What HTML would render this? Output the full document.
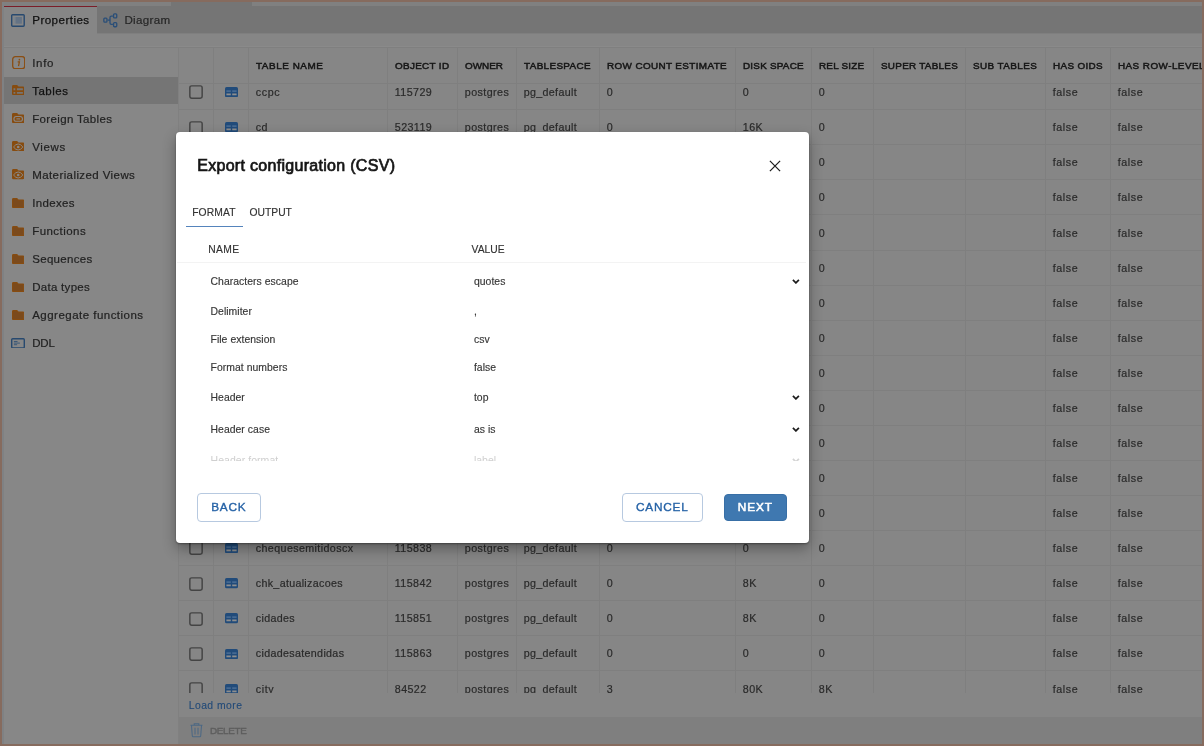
<!DOCTYPE html>
<html lang="en">
<head>
<meta charset="utf-8">
<title>Export configuration (CSV)</title>
<style>
*{box-sizing:border-box;margin:0;padding:0}
html,body{width:1204px;height:746px;overflow:hidden}
body{background:#868686;font-family:"Liberation Sans",sans-serif;color:#1c1c1c}
#app{will-change:transform;position:absolute;left:0;top:0;width:1204px;height:746px;background:#868686;overflow:hidden}
.abs{position:absolute}
.t{position:absolute;white-space:nowrap;line-height:1}
#frame{left:0;top:0;width:1204px;height:746px;box-shadow:inset 0 0 0 2px #866b5e}
#topstrip{left:2px;top:2px;width:1200px;height:4px;background:#808080}
#topstrip i{position:absolute;left:169px;top:0;width:81px;height:4px;background:#757575}
#leftstrip{left:2px;top:2px;width:2px;height:742px;background:#7f8183}
#tabbar{left:4px;top:6px;width:1198px;height:27px;background:#757575}
#tabbar2{left:96.500px;top:33px;width:1105.500px;height:1px;background:#7f7f7f}
#tab1{left:4px;top:6px;width:92.500px;height:27px;background:#868686}
#redline{left:4px;top:5.800px;width:92.500px;height:1.300px;background:#7b1d28}
.k1{color:#111;-webkit-text-stroke:.25px #111}.k2{color:#262626;-webkit-text-stroke:.2px #262626}
#hline0{left:4px;top:46px;width:1198px;height:1px;background:#8a8a8a}
#hline{left:4px;top:47px;width:1198px;height:1px;background:#7f7f7f}
#side{left:4px;top:48px;width:174px;height:696px;background:#878787}
#sel{left:4px;top:77px;width:174px;height:27.400px;background:#757575}
.sb{color:#222;-webkit-text-stroke:.2px #222}.sb.on{color:#111;-webkit-text-stroke:.25px #111}
#vline{left:178px;top:48px;width:1px;height:696px;background:#808080}
#grid{left:0;top:48px;width:1202px;height:645px;overflow:hidden}
#grid>*{margin-top:-48px}
#ghead{left:179px;top:48px;width:1023px;height:36px;background:#868686;border-bottom:1px solid #7f7f7f}
.rl{left:179px;width:1023px;height:1px;background:#7f7f7f}
.cl,.cl2{top:48px;width:1px;height:645px;background:#7f7f7f}
.cl2{height:36px}
.cb{position:absolute;left:189px;width:14px;height:14px;border:1.800px solid #3e3e3e;border-radius:2.500px}
.ce{color:#2a2a2a;-webkit-text-stroke:.2px #2a2a2a}
.gh{color:#161616;-webkit-text-stroke:.5px #161616}
.lm{color:#224a78;-webkit-text-stroke:.1px #224a78}
#foot{left:179px;top:717.400px;width:1023px;height:26.600px;background:#7f7f7f}
.del{color:#5e5e5e;-webkit-text-stroke:.4px #5e5e5e}
#dlg{left:176px;top:131.500px;width:632.800px;height:411px;background:#fff;border-radius:4px;box-shadow:0 1px 2px rgba(0,0,0,.35),0 6px 14px rgba(0,0,0,.32)}
.ttl{color:#161616;-webkit-text-stroke:.7px #161616}
.dt{color:#333;-webkit-text-stroke:.15px #333}
#ul{left:185.500px;top:225.500px;width:57px;height:1.400px;background:#5584bc}
#thl{left:177px;top:262px;width:629px;height:1px;background:#f3f3f3}
.pr{color:#363636;-webkit-text-stroke:.15px #363636}
#clip{left:176px;top:450px;width:632px;height:11.200px;overflow:hidden}
.fd{color:#cfcfcf;-webkit-text-stroke:0 #cfcfcf}
.btn{top:493.100px;height:28.500px;border:1px solid #b7c9e0;border-radius:4px;background:#fff}
.btn.nx{background:#3f78b0;border-color:#386fa6;top:493.600px;height:27.700px}
.bt{color:#2562a6;-webkit-text-stroke:.35px #2562a6}
.bt.bn{color:#fff;-webkit-text-stroke:.55px #fff}
</style>
</head>
<body>
<div id="app">
<div class="abs" id="topstrip"><i></i></div>
<div class="abs" id="tabbar"></div><div class="abs" id="tabbar2"></div>
<div class="abs" id="tab1"></div><div class="abs" id="redline"></div>
<svg class="abs" style="left:11.200px;top:14px" width="14" height="13" viewBox="0 0 14 13"><rect x=".7" y=".7" width="12.500" height="11.500" rx=".9" fill="none" stroke="#27496f" stroke-width="1.400"/><rect x="2.800" y="3" width="1.700" height="6.700" fill="#78838d"/><rect x="4.500" y="3" width="6.400" height="6.700" fill="#647385"/></svg>
<span class="t k1" style="left:32.2px;top:13.8px;font-size:11.6px;letter-spacing:0.455px;">Properties</span>
<svg class="abs" style="left:103px;top:13.200px" width="15" height="15" viewBox="0 0 15 15" fill="none" stroke="#294e78" stroke-width="1.300"><rect x=".85" y="5.150" width="3.100" height="3.900" rx=".9"/><rect x="10.550" y=".85" width="3.200" height="4" rx=".9"/><rect x="10.550" y="9.650" width="3.200" height="4.100" rx=".9"/><path d="M4.600 7.200h2.400M9.900 3.100H8.300Q7 3.100 7 4.400v5.700q0 1.300 1.300 1.300h1.600"/></svg>
<span class="t k2" style="left:124.4px;top:13.8px;font-size:11.6px;letter-spacing:0.312px;">Diagram</span>
<div class="abs" id="hline0"></div><div class="abs" id="hline"></div>
<div class="abs" id="side"></div><div class="abs" id="sel"></div>
<svg class="abs" style="left:11.7px;top:55.7px" width="13.4" height="13.4" viewBox="0 0 13.4 13.4"><rect x=".7" y=".7" width="12" height="12" rx="2.600" fill="none" stroke="#8a4e13" stroke-width="1.300"/><circle cx="7.400" cy="3.700" r=".85" fill="#8a4e13"/><path d="M5.700 5.900h1.700l-.9 4.300" fill="none" stroke="#8a4e13" stroke-width="1.250"/></svg>
<span class="t sb" style="left:32.2px;top:57.5px;font-size:11.5px;letter-spacing:0.697px;">Info</span>
<svg class="abs" style="left:11.9px;top:85.2px" width="12.4" height="10.2" viewBox="0 0 12.4 10.2"><path d="M1.500 .6h3.300l1.300 1.400h4.800q.9 0 .9 .9v5.800q0 .9-.9 .9H1.500q-.9 0-.9-.9V1.500q0-.9 .9-.9z" fill="#874c10" stroke="#874c10" stroke-width="1.200"/><path d="M1.500 3.300h1.800v1.900H1.500zM4.900 3.300h6v1.900h-6zM1.500 6.900h1.800v1.900H1.500zM4.900 6.900h6v1.900h-6z" fill="#757575"/></svg>
<span class="t sb on" style="left:32.2px;top:85.6px;font-size:11.5px;letter-spacing:0.505px;">Tables</span>
<svg class="abs" style="left:11.9px;top:113.3px" width="12.4" height="10.2" viewBox="0 0 12.4 10.2"><path d="M1.500 .6h3.300l1.300 1.400h4.800q.9 0 .9 .9v5.800q0 .9-.9 .9H1.500q-.9 0-.9-.9V1.500q0-.9 .9-.9z" fill="#874c10" stroke="#874c10" stroke-width="1.200"/><rect x="1.900" y="3.500" width="8.600" height="4.800" rx="2.400" fill="none" stroke="#888888" stroke-width="1.100"/><path d="M4.400 5.900h3.600" stroke="#888888" stroke-width="1.100"/></svg>
<span class="t sb" style="left:32.2px;top:113.6px;font-size:11.5px;letter-spacing:0.349px;">Foreign Tables</span>
<svg class="abs" style="left:11.9px;top:141.3px" width="12.4" height="10.2" viewBox="0 0 12.4 10.2"><path d="M1.500 .6h3.300l1.300 1.400h4.800q.9 0 .9 .9v5.800q0 .9-.9 .9H1.500q-.9 0-.9-.9V1.500q0-.9 .9-.9z" fill="#874c10" stroke="#874c10" stroke-width="1.200"/><path d="M1.500 6q2.200-3 4.700-3t4.700 3q-2.200 3-4.700 3T1.500 6z" fill="none" stroke="#888888" stroke-width="1"/><circle cx="6.200" cy="6" r="1.300" fill="#888888"/></svg>
<span class="t sb" style="left:32.2px;top:141.7px;font-size:11.5px;letter-spacing:0.627px;">Views</span>
<svg class="abs" style="left:11.9px;top:169.4px" width="12.4" height="10.2" viewBox="0 0 12.4 10.2"><path d="M1.500 .6h3.300l1.300 1.400h4.800q.9 0 .9 .9v5.800q0 .9-.9 .9H1.500q-.9 0-.9-.9V1.500q0-.9 .9-.9z" fill="#874c10" stroke="#874c10" stroke-width="1.200"/><path d="M1.500 6q2.200-3 4.700-3t4.700 3q-2.200 3-4.700 3T1.500 6z" fill="none" stroke="#888888" stroke-width="1"/><circle cx="6.200" cy="6" r="1.300" fill="#888888"/></svg>
<span class="t sb" style="left:32.2px;top:169.7px;font-size:11.5px;letter-spacing:0.412px;">Materialized Views</span>
<svg class="abs" style="left:11.9px;top:197.5px" width="12.4" height="10.2" viewBox="0 0 12.4 10.2"><path d="M1.500 .6h3.300l1.300 1.400h4.800q.9 0 .9 .9v5.800q0 .9-.9 .9H1.500q-.9 0-.9-.9V1.500q0-.9 .9-.9z" fill="#7b4a1c" stroke="#874c10" stroke-width="1.200"/></svg>
<span class="t sb" style="left:32.2px;top:197.8px;font-size:11.5px;letter-spacing:0.333px;">Indexes</span>
<svg class="abs" style="left:11.9px;top:225.6px" width="12.4" height="10.2" viewBox="0 0 12.4 10.2"><path d="M1.500 .6h3.300l1.300 1.400h4.800q.9 0 .9 .9v5.800q0 .9-.9 .9H1.500q-.9 0-.9-.9V1.500q0-.9 .9-.9z" fill="#7b4a1c" stroke="#874c10" stroke-width="1.200"/></svg>
<span class="t sb" style="left:32.2px;top:225.8px;font-size:11.5px;letter-spacing:0.452px;">Functions</span>
<svg class="abs" style="left:11.9px;top:253.7px" width="12.4" height="10.2" viewBox="0 0 12.4 10.2"><path d="M1.500 .6h3.300l1.300 1.400h4.800q.9 0 .9 .9v5.800q0 .9-.9 .9H1.500q-.9 0-.9-.9V1.500q0-.9 .9-.9z" fill="#7b4a1c" stroke="#874c10" stroke-width="1.200"/></svg>
<span class="t sb" style="left:32.2px;top:253.9px;font-size:11.5px;letter-spacing:0.316px;">Sequences</span>
<svg class="abs" style="left:11.9px;top:281.7px" width="12.4" height="10.2" viewBox="0 0 12.4 10.2"><path d="M1.500 .6h3.300l1.300 1.400h4.800q.9 0 .9 .9v5.800q0 .9-.9 .9H1.500q-.9 0-.9-.9V1.500q0-.9 .9-.9z" fill="#7b4a1c" stroke="#874c10" stroke-width="1.200"/></svg>
<span class="t sb" style="left:32.2px;top:281.9px;font-size:11.5px;letter-spacing:0.288px;">Data types</span>
<svg class="abs" style="left:11.9px;top:309.8px" width="12.4" height="10.2" viewBox="0 0 12.4 10.2"><path d="M1.500 .6h3.300l1.300 1.400h4.800q.9 0 .9 .9v5.800q0 .9-.9 .9H1.500q-.9 0-.9-.9V1.500q0-.9 .9-.9z" fill="#7b4a1c" stroke="#874c10" stroke-width="1.200"/></svg>
<span class="t sb" style="left:32.2px;top:310.0px;font-size:11.5px;letter-spacing:0.477px;">Aggregate functions</span>
<svg class="abs" style="left:11.1px;top:337.6px" width="14" height="10.7" viewBox="0 0 14 10.7"><rect x=".7" y=".7" width="12.600" height="9.300" rx="1" fill="none" stroke="#27496f" stroke-width="1.400"/><path d="M2.900 3.500h3.600M2.900 5.100h6M2.900 6.700h3.200" stroke="#3a5878" stroke-width="1"/></svg>
<span class="t sb" style="left:32.2px;top:338.0px;font-size:11.5px;letter-spacing:-0.169px;">DDL</span>
<div class="abs" id="vline"></div>
<div class="abs" id="grid">
<div class="abs rl" style="top:109.0px"></div>
<svg class="abs" style="left:189px;top:85.4px" width="14" height="14" viewBox="0 0 14 14"><rect x=".85" y=".85" width="12.300" height="12.300" rx="1.800" fill="none" stroke="#444" stroke-width="1.450"/></svg>
<svg class="abs" style="left:225px;top:87.2px" width="13" height="10.300" viewBox="0 0 13 10.300"><rect width="13" height="10.300" rx="1.600" fill="#214b7a"/><path d="M1.400 3.300h4.400v1.700H1.400zM7.200 3.300h4.400v1.700H7.200z" fill="#466a92"/><path d="M1.400 6.600h4.400v1.700H1.400zM7.200 6.600h4.400v1.700H7.200z" fill="#8e8e8e"/></svg>
<span class="t ce" style="left:255.8px;top:87.1px;font-size:10.7px;letter-spacing:0.642px;">ccpc</span>
<span class="t ce" style="left:394.8px;top:87.1px;font-size:10.7px;letter-spacing:0.427px;">115729</span>
<span class="t ce" style="left:464.8px;top:87.1px;font-size:10.7px;letter-spacing:0.43px;">postgres</span>
<span class="t ce" style="left:523.8px;top:87.1px;font-size:10.7px;letter-spacing:0.321px;">pg_default</span>
<span class="t ce" style="left:606.8px;top:87.1px;font-size:10.7px;letter-spacing:0.4px;">0</span>
<span class="t ce" style="left:742.8px;top:87.1px;font-size:10.7px;letter-spacing:0.4px;">0</span>
<span class="t ce" style="left:818.8px;top:87.1px;font-size:10.7px;letter-spacing:0.4px;">0</span>
<span class="t ce" style="left:1052.8px;top:87.1px;font-size:10.7px;letter-spacing:0.558px;">false</span>
<span class="t ce" style="left:1117.8px;top:87.1px;font-size:10.7px;letter-spacing:0.558px;">false</span>
<div class="abs rl" style="top:144.0px"></div>
<svg class="abs" style="left:189px;top:120.5px" width="14" height="14" viewBox="0 0 14 14"><rect x=".85" y=".85" width="12.300" height="12.300" rx="1.800" fill="none" stroke="#444" stroke-width="1.450"/></svg>
<svg class="abs" style="left:225px;top:122.3px" width="13" height="10.300" viewBox="0 0 13 10.300"><rect width="13" height="10.300" rx="1.600" fill="#214b7a"/><path d="M1.400 3.300h4.400v1.700H1.400zM7.200 3.300h4.400v1.700H7.200z" fill="#466a92"/><path d="M1.400 6.600h4.400v1.700H1.400zM7.200 6.600h4.400v1.700H7.200z" fill="#8e8e8e"/></svg>
<span class="t ce" style="left:255.8px;top:122.2px;font-size:10.7px;letter-spacing:0.4px;">cd</span>
<span class="t ce" style="left:394.8px;top:122.2px;font-size:10.7px;letter-spacing:0.4px;">523119</span>
<span class="t ce" style="left:464.8px;top:122.2px;font-size:10.7px;letter-spacing:0.43px;">postgres</span>
<span class="t ce" style="left:523.8px;top:122.2px;font-size:10.7px;letter-spacing:0.321px;">pg_default</span>
<span class="t ce" style="left:606.8px;top:122.2px;font-size:10.7px;letter-spacing:0.4px;">0</span>
<span class="t ce" style="left:742.8px;top:122.2px;font-size:10.7px;letter-spacing:0.4px;">16K</span>
<span class="t ce" style="left:818.8px;top:122.2px;font-size:10.7px;letter-spacing:0.4px;">0</span>
<span class="t ce" style="left:1052.8px;top:122.2px;font-size:10.7px;letter-spacing:0.558px;">false</span>
<span class="t ce" style="left:1117.8px;top:122.2px;font-size:10.7px;letter-spacing:0.558px;">false</span>
<div class="abs rl" style="top:179.0px"></div>
<svg class="abs" style="left:189px;top:155.6px" width="14" height="14" viewBox="0 0 14 14"><rect x=".85" y=".85" width="12.300" height="12.300" rx="1.800" fill="none" stroke="#444" stroke-width="1.450"/></svg>
<svg class="abs" style="left:225px;top:157.4px" width="13" height="10.300" viewBox="0 0 13 10.300"><rect width="13" height="10.300" rx="1.600" fill="#214b7a"/><path d="M1.400 3.300h4.400v1.700H1.400zM7.200 3.300h4.400v1.700H7.200z" fill="#466a92"/><path d="M1.400 6.600h4.400v1.700H1.400zM7.200 6.600h4.400v1.700H7.200z" fill="#8e8e8e"/></svg>
<span class="t ce" style="left:255.8px;top:157.3px;font-size:10.7px;letter-spacing:0.4px;">cda</span>
<span class="t ce" style="left:394.8px;top:157.3px;font-size:10.7px;letter-spacing:0.4px;">115735</span>
<span class="t ce" style="left:464.8px;top:157.3px;font-size:10.7px;letter-spacing:0.43px;">postgres</span>
<span class="t ce" style="left:523.8px;top:157.3px;font-size:10.7px;letter-spacing:0.321px;">pg_default</span>
<span class="t ce" style="left:606.8px;top:157.3px;font-size:10.7px;letter-spacing:0.4px;">0</span>
<span class="t ce" style="left:742.8px;top:157.3px;font-size:10.7px;letter-spacing:0.4px;">0</span>
<span class="t ce" style="left:818.8px;top:157.3px;font-size:10.7px;letter-spacing:0.4px;">0</span>
<span class="t ce" style="left:1052.8px;top:157.3px;font-size:10.7px;letter-spacing:0.558px;">false</span>
<span class="t ce" style="left:1117.8px;top:157.3px;font-size:10.7px;letter-spacing:0.558px;">false</span>
<div class="abs rl" style="top:214.0px"></div>
<svg class="abs" style="left:189px;top:190.6px" width="14" height="14" viewBox="0 0 14 14"><rect x=".85" y=".85" width="12.300" height="12.300" rx="1.800" fill="none" stroke="#444" stroke-width="1.450"/></svg>
<svg class="abs" style="left:225px;top:192.4px" width="13" height="10.300" viewBox="0 0 13 10.300"><rect width="13" height="10.300" rx="1.600" fill="#214b7a"/><path d="M1.400 3.300h4.400v1.700H1.400zM7.200 3.300h4.400v1.700H7.200z" fill="#466a92"/><path d="M1.400 6.600h4.400v1.700H1.400zM7.200 6.600h4.400v1.700H7.200z" fill="#8e8e8e"/></svg>
<span class="t ce" style="left:255.8px;top:192.4px;font-size:10.7px;letter-spacing:0.4px;">cdb</span>
<span class="t ce" style="left:394.8px;top:192.4px;font-size:10.7px;letter-spacing:0.4px;">115741</span>
<span class="t ce" style="left:464.8px;top:192.4px;font-size:10.7px;letter-spacing:0.43px;">postgres</span>
<span class="t ce" style="left:523.8px;top:192.4px;font-size:10.7px;letter-spacing:0.321px;">pg_default</span>
<span class="t ce" style="left:606.8px;top:192.4px;font-size:10.7px;letter-spacing:0.4px;">0</span>
<span class="t ce" style="left:742.8px;top:192.4px;font-size:10.7px;letter-spacing:0.4px;">0</span>
<span class="t ce" style="left:818.8px;top:192.4px;font-size:10.7px;letter-spacing:0.4px;">0</span>
<span class="t ce" style="left:1052.8px;top:192.4px;font-size:10.7px;letter-spacing:0.558px;">false</span>
<span class="t ce" style="left:1117.8px;top:192.4px;font-size:10.7px;letter-spacing:0.558px;">false</span>
<div class="abs rl" style="top:250.0px"></div>
<svg class="abs" style="left:189px;top:225.7px" width="14" height="14" viewBox="0 0 14 14"><rect x=".85" y=".85" width="12.300" height="12.300" rx="1.800" fill="none" stroke="#444" stroke-width="1.450"/></svg>
<svg class="abs" style="left:225px;top:227.5px" width="13" height="10.300" viewBox="0 0 13 10.300"><rect width="13" height="10.300" rx="1.600" fill="#214b7a"/><path d="M1.400 3.300h4.400v1.700H1.400zM7.200 3.300h4.400v1.700H7.200z" fill="#466a92"/><path d="M1.400 6.600h4.400v1.700H1.400zM7.200 6.600h4.400v1.700H7.200z" fill="#8e8e8e"/></svg>
<span class="t ce" style="left:255.8px;top:227.5px;font-size:10.7px;letter-spacing:0.4px;">cdc</span>
<span class="t ce" style="left:394.8px;top:227.5px;font-size:10.7px;letter-spacing:0.4px;">115750</span>
<span class="t ce" style="left:464.8px;top:227.5px;font-size:10.7px;letter-spacing:0.43px;">postgres</span>
<span class="t ce" style="left:523.8px;top:227.5px;font-size:10.7px;letter-spacing:0.321px;">pg_default</span>
<span class="t ce" style="left:606.8px;top:227.5px;font-size:10.7px;letter-spacing:0.4px;">0</span>
<span class="t ce" style="left:742.8px;top:227.5px;font-size:10.7px;letter-spacing:0.4px;">0</span>
<span class="t ce" style="left:818.8px;top:227.5px;font-size:10.7px;letter-spacing:0.4px;">0</span>
<span class="t ce" style="left:1052.8px;top:227.5px;font-size:10.7px;letter-spacing:0.558px;">false</span>
<span class="t ce" style="left:1117.8px;top:227.5px;font-size:10.7px;letter-spacing:0.558px;">false</span>
<div class="abs rl" style="top:285.0px"></div>
<svg class="abs" style="left:189px;top:260.8px" width="14" height="14" viewBox="0 0 14 14"><rect x=".85" y=".85" width="12.300" height="12.300" rx="1.800" fill="none" stroke="#444" stroke-width="1.450"/></svg>
<svg class="abs" style="left:225px;top:262.6px" width="13" height="10.300" viewBox="0 0 13 10.300"><rect width="13" height="10.300" rx="1.600" fill="#214b7a"/><path d="M1.400 3.300h4.400v1.700H1.400zM7.200 3.300h4.400v1.700H7.200z" fill="#466a92"/><path d="M1.400 6.600h4.400v1.700H1.400zM7.200 6.600h4.400v1.700H7.200z" fill="#8e8e8e"/></svg>
<span class="t ce" style="left:255.8px;top:262.5px;font-size:10.7px;letter-spacing:0.4px;">cdd</span>
<span class="t ce" style="left:394.8px;top:262.5px;font-size:10.7px;letter-spacing:0.4px;">115759</span>
<span class="t ce" style="left:464.8px;top:262.5px;font-size:10.7px;letter-spacing:0.43px;">postgres</span>
<span class="t ce" style="left:523.8px;top:262.5px;font-size:10.7px;letter-spacing:0.321px;">pg_default</span>
<span class="t ce" style="left:606.8px;top:262.5px;font-size:10.7px;letter-spacing:0.4px;">0</span>
<span class="t ce" style="left:742.8px;top:262.5px;font-size:10.7px;letter-spacing:0.4px;">0</span>
<span class="t ce" style="left:818.8px;top:262.5px;font-size:10.7px;letter-spacing:0.4px;">0</span>
<span class="t ce" style="left:1052.8px;top:262.5px;font-size:10.7px;letter-spacing:0.558px;">false</span>
<span class="t ce" style="left:1117.8px;top:262.5px;font-size:10.7px;letter-spacing:0.558px;">false</span>
<div class="abs rl" style="top:320.0px"></div>
<svg class="abs" style="left:189px;top:295.9px" width="14" height="14" viewBox="0 0 14 14"><rect x=".85" y=".85" width="12.300" height="12.300" rx="1.800" fill="none" stroke="#444" stroke-width="1.450"/></svg>
<svg class="abs" style="left:225px;top:297.7px" width="13" height="10.300" viewBox="0 0 13 10.300"><rect width="13" height="10.300" rx="1.600" fill="#214b7a"/><path d="M1.400 3.300h4.400v1.700H1.400zM7.200 3.300h4.400v1.700H7.200z" fill="#466a92"/><path d="M1.400 6.600h4.400v1.700H1.400zM7.200 6.600h4.400v1.700H7.200z" fill="#8e8e8e"/></svg>
<span class="t ce" style="left:255.8px;top:297.6px;font-size:10.7px;letter-spacing:0.4px;">cde</span>
<span class="t ce" style="left:394.8px;top:297.6px;font-size:10.7px;letter-spacing:0.4px;">115765</span>
<span class="t ce" style="left:464.8px;top:297.6px;font-size:10.7px;letter-spacing:0.43px;">postgres</span>
<span class="t ce" style="left:523.8px;top:297.6px;font-size:10.7px;letter-spacing:0.321px;">pg_default</span>
<span class="t ce" style="left:606.8px;top:297.6px;font-size:10.7px;letter-spacing:0.4px;">0</span>
<span class="t ce" style="left:742.8px;top:297.6px;font-size:10.7px;letter-spacing:0.4px;">0</span>
<span class="t ce" style="left:818.8px;top:297.6px;font-size:10.7px;letter-spacing:0.4px;">0</span>
<span class="t ce" style="left:1052.8px;top:297.6px;font-size:10.7px;letter-spacing:0.558px;">false</span>
<span class="t ce" style="left:1117.8px;top:297.6px;font-size:10.7px;letter-spacing:0.558px;">false</span>
<div class="abs rl" style="top:355.0px"></div>
<svg class="abs" style="left:189px;top:331.0px" width="14" height="14" viewBox="0 0 14 14"><rect x=".85" y=".85" width="12.300" height="12.300" rx="1.800" fill="none" stroke="#444" stroke-width="1.450"/></svg>
<svg class="abs" style="left:225px;top:332.8px" width="13" height="10.300" viewBox="0 0 13 10.300"><rect width="13" height="10.300" rx="1.600" fill="#214b7a"/><path d="M1.400 3.300h4.400v1.700H1.400zM7.200 3.300h4.400v1.700H7.200z" fill="#466a92"/><path d="M1.400 6.600h4.400v1.700H1.400zM7.200 6.600h4.400v1.700H7.200z" fill="#8e8e8e"/></svg>
<span class="t ce" style="left:255.8px;top:332.7px;font-size:10.7px;letter-spacing:0.4px;">cdf</span>
<span class="t ce" style="left:394.8px;top:332.7px;font-size:10.7px;letter-spacing:0.4px;">115771</span>
<span class="t ce" style="left:464.8px;top:332.7px;font-size:10.7px;letter-spacing:0.43px;">postgres</span>
<span class="t ce" style="left:523.8px;top:332.7px;font-size:10.7px;letter-spacing:0.321px;">pg_default</span>
<span class="t ce" style="left:606.8px;top:332.7px;font-size:10.7px;letter-spacing:0.4px;">0</span>
<span class="t ce" style="left:742.8px;top:332.7px;font-size:10.7px;letter-spacing:0.4px;">0</span>
<span class="t ce" style="left:818.8px;top:332.7px;font-size:10.7px;letter-spacing:0.4px;">0</span>
<span class="t ce" style="left:1052.8px;top:332.7px;font-size:10.7px;letter-spacing:0.558px;">false</span>
<span class="t ce" style="left:1117.8px;top:332.7px;font-size:10.7px;letter-spacing:0.558px;">false</span>
<div class="abs rl" style="top:390.0px"></div>
<svg class="abs" style="left:189px;top:366.0px" width="14" height="14" viewBox="0 0 14 14"><rect x=".85" y=".85" width="12.300" height="12.300" rx="1.800" fill="none" stroke="#444" stroke-width="1.450"/></svg>
<svg class="abs" style="left:225px;top:367.8px" width="13" height="10.300" viewBox="0 0 13 10.300"><rect width="13" height="10.300" rx="1.600" fill="#214b7a"/><path d="M1.400 3.300h4.400v1.700H1.400zM7.200 3.300h4.400v1.700H7.200z" fill="#466a92"/><path d="M1.400 6.600h4.400v1.700H1.400zM7.200 6.600h4.400v1.700H7.200z" fill="#8e8e8e"/></svg>
<span class="t ce" style="left:255.8px;top:367.8px;font-size:10.7px;letter-spacing:0.4px;">cdg</span>
<span class="t ce" style="left:394.8px;top:367.8px;font-size:10.7px;letter-spacing:0.4px;">115780</span>
<span class="t ce" style="left:464.8px;top:367.8px;font-size:10.7px;letter-spacing:0.43px;">postgres</span>
<span class="t ce" style="left:523.8px;top:367.8px;font-size:10.7px;letter-spacing:0.321px;">pg_default</span>
<span class="t ce" style="left:606.8px;top:367.8px;font-size:10.7px;letter-spacing:0.4px;">0</span>
<span class="t ce" style="left:742.8px;top:367.8px;font-size:10.7px;letter-spacing:0.4px;">0</span>
<span class="t ce" style="left:818.8px;top:367.8px;font-size:10.7px;letter-spacing:0.4px;">0</span>
<span class="t ce" style="left:1052.8px;top:367.8px;font-size:10.7px;letter-spacing:0.558px;">false</span>
<span class="t ce" style="left:1117.8px;top:367.8px;font-size:10.7px;letter-spacing:0.558px;">false</span>
<div class="abs rl" style="top:425.0px"></div>
<svg class="abs" style="left:189px;top:401.1px" width="14" height="14" viewBox="0 0 14 14"><rect x=".85" y=".85" width="12.300" height="12.300" rx="1.800" fill="none" stroke="#444" stroke-width="1.450"/></svg>
<svg class="abs" style="left:225px;top:402.9px" width="13" height="10.300" viewBox="0 0 13 10.300"><rect width="13" height="10.300" rx="1.600" fill="#214b7a"/><path d="M1.400 3.300h4.400v1.700H1.400zM7.200 3.300h4.400v1.700H7.200z" fill="#466a92"/><path d="M1.400 6.600h4.400v1.700H1.400zM7.200 6.600h4.400v1.700H7.200z" fill="#8e8e8e"/></svg>
<span class="t ce" style="left:255.8px;top:402.9px;font-size:10.7px;letter-spacing:0.4px;">cdh</span>
<span class="t ce" style="left:394.8px;top:402.9px;font-size:10.7px;letter-spacing:0.4px;">115789</span>
<span class="t ce" style="left:464.8px;top:402.9px;font-size:10.7px;letter-spacing:0.43px;">postgres</span>
<span class="t ce" style="left:523.8px;top:402.9px;font-size:10.7px;letter-spacing:0.321px;">pg_default</span>
<span class="t ce" style="left:606.8px;top:402.9px;font-size:10.7px;letter-spacing:0.4px;">0</span>
<span class="t ce" style="left:742.8px;top:402.9px;font-size:10.7px;letter-spacing:0.4px;">0</span>
<span class="t ce" style="left:818.8px;top:402.9px;font-size:10.7px;letter-spacing:0.4px;">0</span>
<span class="t ce" style="left:1052.8px;top:402.9px;font-size:10.7px;letter-spacing:0.558px;">false</span>
<span class="t ce" style="left:1117.8px;top:402.9px;font-size:10.7px;letter-spacing:0.558px;">false</span>
<div class="abs rl" style="top:460.0px"></div>
<svg class="abs" style="left:189px;top:436.2px" width="14" height="14" viewBox="0 0 14 14"><rect x=".85" y=".85" width="12.300" height="12.300" rx="1.800" fill="none" stroke="#444" stroke-width="1.450"/></svg>
<svg class="abs" style="left:225px;top:438.0px" width="13" height="10.300" viewBox="0 0 13 10.300"><rect width="13" height="10.300" rx="1.600" fill="#214b7a"/><path d="M1.400 3.300h4.400v1.700H1.400zM7.200 3.300h4.400v1.700H7.200z" fill="#466a92"/><path d="M1.400 6.600h4.400v1.700H1.400zM7.200 6.600h4.400v1.700H7.200z" fill="#8e8e8e"/></svg>
<span class="t ce" style="left:255.8px;top:437.9px;font-size:10.7px;letter-spacing:0.4px;">cdi</span>
<span class="t ce" style="left:394.8px;top:437.9px;font-size:10.7px;letter-spacing:0.4px;">115800</span>
<span class="t ce" style="left:464.8px;top:437.9px;font-size:10.7px;letter-spacing:0.43px;">postgres</span>
<span class="t ce" style="left:523.8px;top:437.9px;font-size:10.7px;letter-spacing:0.321px;">pg_default</span>
<span class="t ce" style="left:606.8px;top:437.9px;font-size:10.7px;letter-spacing:0.4px;">0</span>
<span class="t ce" style="left:742.8px;top:437.9px;font-size:10.7px;letter-spacing:0.4px;">0</span>
<span class="t ce" style="left:818.8px;top:437.9px;font-size:10.7px;letter-spacing:0.4px;">0</span>
<span class="t ce" style="left:1052.8px;top:437.9px;font-size:10.7px;letter-spacing:0.558px;">false</span>
<span class="t ce" style="left:1117.8px;top:437.9px;font-size:10.7px;letter-spacing:0.558px;">false</span>
<div class="abs rl" style="top:495.0px"></div>
<svg class="abs" style="left:189px;top:471.3px" width="14" height="14" viewBox="0 0 14 14"><rect x=".85" y=".85" width="12.300" height="12.300" rx="1.800" fill="none" stroke="#444" stroke-width="1.450"/></svg>
<svg class="abs" style="left:225px;top:473.1px" width="13" height="10.300" viewBox="0 0 13 10.300"><rect width="13" height="10.300" rx="1.600" fill="#214b7a"/><path d="M1.400 3.300h4.400v1.700H1.400zM7.200 3.300h4.400v1.700H7.200z" fill="#466a92"/><path d="M1.400 6.600h4.400v1.700H1.400zM7.200 6.600h4.400v1.700H7.200z" fill="#8e8e8e"/></svg>
<span class="t ce" style="left:255.8px;top:473.0px;font-size:10.7px;letter-spacing:0.4px;">cdj</span>
<span class="t ce" style="left:394.8px;top:473.0px;font-size:10.7px;letter-spacing:0.4px;">115811</span>
<span class="t ce" style="left:464.8px;top:473.0px;font-size:10.7px;letter-spacing:0.43px;">postgres</span>
<span class="t ce" style="left:523.8px;top:473.0px;font-size:10.7px;letter-spacing:0.321px;">pg_default</span>
<span class="t ce" style="left:606.8px;top:473.0px;font-size:10.7px;letter-spacing:0.4px;">0</span>
<span class="t ce" style="left:742.8px;top:473.0px;font-size:10.7px;letter-spacing:0.4px;">0</span>
<span class="t ce" style="left:818.8px;top:473.0px;font-size:10.7px;letter-spacing:0.4px;">0</span>
<span class="t ce" style="left:1052.8px;top:473.0px;font-size:10.7px;letter-spacing:0.558px;">false</span>
<span class="t ce" style="left:1117.8px;top:473.0px;font-size:10.7px;letter-spacing:0.558px;">false</span>
<div class="abs rl" style="top:530.0px"></div>
<svg class="abs" style="left:189px;top:506.4px" width="14" height="14" viewBox="0 0 14 14"><rect x=".85" y=".85" width="12.300" height="12.300" rx="1.800" fill="none" stroke="#444" stroke-width="1.450"/></svg>
<svg class="abs" style="left:225px;top:508.2px" width="13" height="10.300" viewBox="0 0 13 10.300"><rect width="13" height="10.300" rx="1.600" fill="#214b7a"/><path d="M1.400 3.300h4.400v1.700H1.400zM7.200 3.300h4.400v1.700H7.200z" fill="#466a92"/><path d="M1.400 6.600h4.400v1.700H1.400zM7.200 6.600h4.400v1.700H7.200z" fill="#8e8e8e"/></svg>
<span class="t ce" style="left:255.8px;top:508.1px;font-size:10.7px;letter-spacing:0.4px;">cdk</span>
<span class="t ce" style="left:394.8px;top:508.1px;font-size:10.7px;letter-spacing:0.4px;">115820</span>
<span class="t ce" style="left:464.8px;top:508.1px;font-size:10.7px;letter-spacing:0.43px;">postgres</span>
<span class="t ce" style="left:523.8px;top:508.1px;font-size:10.7px;letter-spacing:0.321px;">pg_default</span>
<span class="t ce" style="left:606.8px;top:508.1px;font-size:10.7px;letter-spacing:0.4px;">0</span>
<span class="t ce" style="left:742.8px;top:508.1px;font-size:10.7px;letter-spacing:0.4px;">0</span>
<span class="t ce" style="left:818.8px;top:508.1px;font-size:10.7px;letter-spacing:0.4px;">0</span>
<span class="t ce" style="left:1052.8px;top:508.1px;font-size:10.7px;letter-spacing:0.558px;">false</span>
<span class="t ce" style="left:1117.8px;top:508.1px;font-size:10.7px;letter-spacing:0.558px;">false</span>
<div class="abs rl" style="top:565.0px"></div>
<svg class="abs" style="left:189px;top:541.4px" width="14" height="14" viewBox="0 0 14 14"><rect x=".85" y=".85" width="12.300" height="12.300" rx="1.800" fill="none" stroke="#444" stroke-width="1.450"/></svg>
<svg class="abs" style="left:225px;top:543.2px" width="13" height="10.300" viewBox="0 0 13 10.300"><rect width="13" height="10.300" rx="1.600" fill="#214b7a"/><path d="M1.400 3.300h4.400v1.700H1.400zM7.200 3.300h4.400v1.700H7.200z" fill="#466a92"/><path d="M1.400 6.600h4.400v1.700H1.400zM7.200 6.600h4.400v1.700H7.200z" fill="#8e8e8e"/></svg>
<span class="t ce" style="left:255.8px;top:543.2px;font-size:10.7px;letter-spacing:0.394px;">chequesemitidoscx</span>
<span class="t ce" style="left:394.8px;top:543.2px;font-size:10.7px;letter-spacing:0.4px;">115838</span>
<span class="t ce" style="left:464.8px;top:543.2px;font-size:10.7px;letter-spacing:0.43px;">postgres</span>
<span class="t ce" style="left:523.8px;top:543.2px;font-size:10.7px;letter-spacing:0.321px;">pg_default</span>
<span class="t ce" style="left:606.8px;top:543.2px;font-size:10.7px;letter-spacing:0.4px;">0</span>
<span class="t ce" style="left:742.8px;top:543.2px;font-size:10.7px;letter-spacing:0.4px;">0</span>
<span class="t ce" style="left:818.8px;top:543.2px;font-size:10.7px;letter-spacing:0.4px;">0</span>
<span class="t ce" style="left:1052.8px;top:543.2px;font-size:10.7px;letter-spacing:0.558px;">false</span>
<span class="t ce" style="left:1117.8px;top:543.2px;font-size:10.7px;letter-spacing:0.558px;">false</span>
<div class="abs rl" style="top:600.0px"></div>
<svg class="abs" style="left:189px;top:576.5px" width="14" height="14" viewBox="0 0 14 14"><rect x=".85" y=".85" width="12.300" height="12.300" rx="1.800" fill="none" stroke="#444" stroke-width="1.450"/></svg>
<svg class="abs" style="left:225px;top:578.3px" width="13" height="10.300" viewBox="0 0 13 10.300"><rect width="13" height="10.300" rx="1.600" fill="#214b7a"/><path d="M1.400 3.300h4.400v1.700H1.400zM7.200 3.300h4.400v1.700H7.200z" fill="#466a92"/><path d="M1.400 6.600h4.400v1.700H1.400zM7.200 6.600h4.400v1.700H7.200z" fill="#8e8e8e"/></svg>
<span class="t ce" style="left:255.8px;top:578.3px;font-size:10.7px;letter-spacing:0.314px;">chk_atualizacoes</span>
<span class="t ce" style="left:394.8px;top:578.3px;font-size:10.7px;letter-spacing:0.4px;">115842</span>
<span class="t ce" style="left:464.8px;top:578.3px;font-size:10.7px;letter-spacing:0.43px;">postgres</span>
<span class="t ce" style="left:523.8px;top:578.3px;font-size:10.7px;letter-spacing:0.321px;">pg_default</span>
<span class="t ce" style="left:606.8px;top:578.3px;font-size:10.7px;letter-spacing:0.4px;">0</span>
<span class="t ce" style="left:742.8px;top:578.3px;font-size:10.7px;letter-spacing:0.4px;">8K</span>
<span class="t ce" style="left:818.8px;top:578.3px;font-size:10.7px;letter-spacing:0.4px;">0</span>
<span class="t ce" style="left:1052.8px;top:578.3px;font-size:10.7px;letter-spacing:0.558px;">false</span>
<span class="t ce" style="left:1117.8px;top:578.3px;font-size:10.7px;letter-spacing:0.558px;">false</span>
<div class="abs rl" style="top:635.0px"></div>
<svg class="abs" style="left:189px;top:611.6px" width="14" height="14" viewBox="0 0 14 14"><rect x=".85" y=".85" width="12.300" height="12.300" rx="1.800" fill="none" stroke="#444" stroke-width="1.450"/></svg>
<svg class="abs" style="left:225px;top:613.4px" width="13" height="10.300" viewBox="0 0 13 10.300"><rect width="13" height="10.300" rx="1.600" fill="#214b7a"/><path d="M1.400 3.300h4.400v1.700H1.400zM7.200 3.300h4.400v1.700H7.200z" fill="#466a92"/><path d="M1.400 6.600h4.400v1.700H1.400zM7.200 6.600h4.400v1.700H7.200z" fill="#8e8e8e"/></svg>
<span class="t ce" style="left:255.8px;top:613.3px;font-size:10.7px;letter-spacing:0.311px;">cidades</span>
<span class="t ce" style="left:394.8px;top:613.3px;font-size:10.7px;letter-spacing:0.4px;">115851</span>
<span class="t ce" style="left:464.8px;top:613.3px;font-size:10.7px;letter-spacing:0.43px;">postgres</span>
<span class="t ce" style="left:523.8px;top:613.3px;font-size:10.7px;letter-spacing:0.321px;">pg_default</span>
<span class="t ce" style="left:606.8px;top:613.3px;font-size:10.7px;letter-spacing:0.4px;">0</span>
<span class="t ce" style="left:742.8px;top:613.3px;font-size:10.7px;letter-spacing:0.4px;">8K</span>
<span class="t ce" style="left:818.8px;top:613.3px;font-size:10.7px;letter-spacing:0.4px;">0</span>
<span class="t ce" style="left:1052.8px;top:613.3px;font-size:10.7px;letter-spacing:0.558px;">false</span>
<span class="t ce" style="left:1117.8px;top:613.3px;font-size:10.7px;letter-spacing:0.558px;">false</span>
<div class="abs rl" style="top:670.0px"></div>
<svg class="abs" style="left:189px;top:646.7px" width="14" height="14" viewBox="0 0 14 14"><rect x=".85" y=".85" width="12.300" height="12.300" rx="1.800" fill="none" stroke="#444" stroke-width="1.450"/></svg>
<svg class="abs" style="left:225px;top:648.5px" width="13" height="10.300" viewBox="0 0 13 10.300"><rect width="13" height="10.300" rx="1.600" fill="#214b7a"/><path d="M1.400 3.300h4.400v1.700H1.400zM7.200 3.300h4.400v1.700H7.200z" fill="#466a92"/><path d="M1.400 6.600h4.400v1.700H1.400zM7.200 6.600h4.400v1.700H7.200z" fill="#8e8e8e"/></svg>
<span class="t ce" style="left:255.8px;top:648.4px;font-size:10.7px;letter-spacing:0.334px;">cidadesatendidas</span>
<span class="t ce" style="left:394.8px;top:648.4px;font-size:10.7px;letter-spacing:0.4px;">115863</span>
<span class="t ce" style="left:464.8px;top:648.4px;font-size:10.7px;letter-spacing:0.43px;">postgres</span>
<span class="t ce" style="left:523.8px;top:648.4px;font-size:10.7px;letter-spacing:0.321px;">pg_default</span>
<span class="t ce" style="left:606.8px;top:648.4px;font-size:10.7px;letter-spacing:0.4px;">0</span>
<span class="t ce" style="left:742.8px;top:648.4px;font-size:10.7px;letter-spacing:0.4px;">0</span>
<span class="t ce" style="left:818.8px;top:648.4px;font-size:10.7px;letter-spacing:0.4px;">0</span>
<span class="t ce" style="left:1052.8px;top:648.4px;font-size:10.7px;letter-spacing:0.558px;">false</span>
<span class="t ce" style="left:1117.8px;top:648.4px;font-size:10.7px;letter-spacing:0.558px;">false</span>
<div class="abs rl" style="top:706.0px"></div>
<svg class="abs" style="left:189px;top:681.8px" width="14" height="14" viewBox="0 0 14 14"><rect x=".85" y=".85" width="12.300" height="12.300" rx="1.800" fill="none" stroke="#444" stroke-width="1.450"/></svg>
<svg class="abs" style="left:225px;top:683.6px" width="13" height="10.300" viewBox="0 0 13 10.300"><rect width="13" height="10.300" rx="1.600" fill="#214b7a"/><path d="M1.400 3.300h4.400v1.700H1.400zM7.200 3.300h4.400v1.700H7.200z" fill="#466a92"/><path d="M1.400 6.600h4.400v1.700H1.400zM7.200 6.600h4.400v1.700H7.200z" fill="#8e8e8e"/></svg>
<span class="t ce" style="left:255.8px;top:683.5px;font-size:10.7px;letter-spacing:0.559px;">city</span>
<span class="t ce" style="left:394.8px;top:683.5px;font-size:10.7px;letter-spacing:0.4px;">84522</span>
<span class="t ce" style="left:464.8px;top:683.5px;font-size:10.7px;letter-spacing:0.43px;">postgres</span>
<span class="t ce" style="left:523.8px;top:683.5px;font-size:10.7px;letter-spacing:0.321px;">pg_default</span>
<span class="t ce" style="left:606.8px;top:683.5px;font-size:10.7px;letter-spacing:0.4px;">3</span>
<span class="t ce" style="left:742.8px;top:683.5px;font-size:10.7px;letter-spacing:0.4px;">80K</span>
<span class="t ce" style="left:818.8px;top:683.5px;font-size:10.7px;letter-spacing:0.4px;">8K</span>
<span class="t ce" style="left:1052.8px;top:683.5px;font-size:10.7px;letter-spacing:0.558px;">false</span>
<span class="t ce" style="left:1117.8px;top:683.5px;font-size:10.7px;letter-spacing:0.558px;">false</span>
<div class="abs cl" style="left:213px"></div>
<div class="abs cl" style="left:248px"></div>
<div class="abs cl" style="left:387px"></div>
<div class="abs cl" style="left:457px"></div>
<div class="abs cl" style="left:516px"></div>
<div class="abs cl" style="left:599px"></div>
<div class="abs cl" style="left:735px"></div>
<div class="abs cl" style="left:811px"></div>
<div class="abs cl" style="left:873px"></div>
<div class="abs cl" style="left:965px"></div>
<div class="abs cl" style="left:1045px"></div>
<div class="abs cl" style="left:1110px"></div>
<div class="abs" id="ghead"></div>
<span class="t gh" style="left:256.0px;top:60.6px;font-size:9.9px;letter-spacing:0.557px;">TABLE NAME</span>
<span class="t gh" style="left:395.0px;top:60.6px;font-size:9.9px;letter-spacing:0.329px;">OBJECT ID</span>
<span class="t gh" style="left:465.0px;top:60.6px;font-size:9.9px;letter-spacing:0.021px;">OWNER</span>
<span class="t gh" style="left:524.0px;top:60.6px;font-size:9.9px;letter-spacing:0.372px;">TABLESPACE</span>
<span class="t gh" style="left:607.0px;top:60.6px;font-size:9.9px;letter-spacing:0.379px;">ROW COUNT ESTIMATE</span>
<span class="t gh" style="left:743.0px;top:60.6px;font-size:9.9px;letter-spacing:0.233px;">DISK SPACE</span>
<span class="t gh" style="left:819.0px;top:60.6px;font-size:9.9px;letter-spacing:0.214px;">REL SIZE</span>
<span class="t gh" style="left:881.0px;top:60.6px;font-size:9.9px;letter-spacing:0.282px;">SUPER TABLES</span>
<span class="t gh" style="left:973.0px;top:60.6px;font-size:9.9px;letter-spacing:0.414px;">SUB TABLES</span>
<span class="t gh" style="left:1053.0px;top:60.6px;font-size:9.9px;letter-spacing:0.348px;">HAS OIDS</span>
<span class="t gh" style="left:1118.0px;top:60.6px;font-size:9.9px;letter-spacing:0.452px;">HAS ROW-LEVEL SECURITY</span>
<div class="abs cl2" style="left:213px"></div>
<div class="abs cl2" style="left:248px"></div>
<div class="abs cl2" style="left:387px"></div>
<div class="abs cl2" style="left:457px"></div>
<div class="abs cl2" style="left:516px"></div>
<div class="abs cl2" style="left:599px"></div>
<div class="abs cl2" style="left:735px"></div>
<div class="abs cl2" style="left:811px"></div>
<div class="abs cl2" style="left:873px"></div>
<div class="abs cl2" style="left:965px"></div>
<div class="abs cl2" style="left:1045px"></div>
<div class="abs cl2" style="left:1110px"></div>
</div>
<span class="t lm" style="left:188.7px;top:700.8px;font-size:10.4px;letter-spacing:0.45px;">Load more</span>
<div class="abs" id="foot"></div>
<svg class="abs" style="left:189.500px;top:723.400px" width="13" height="14.500" viewBox="0 0 13 14.500" fill="none" stroke="#4c6884" stroke-width="1.050"><path d="M.5 2.300h12M4.200 2.100V.8h4.600v1.300M1.500 2.600l.8 10.400q.1.800 .9 .8h6.600q.8 0 .9-.8l.8-10.400M5 4.800v6.600M8 4.800v6.600"/></svg>
<span class="t del" style="left:210.0px;top:726.2px;font-size:9.9px;letter-spacing:-0.316px;">DELETE</span>
<div class="abs" id="leftstrip"></div><div class="abs" id="frame"></div>
<div class="abs" id="dlg"></div>
<span class="t ttl" style="left:197.2px;top:157.6px;font-size:16px;letter-spacing:0.3px;">Export configuration (CSV)</span>
<svg class="abs" style="left:769px;top:159.500px" width="12" height="12" viewBox="0 0 12 12" stroke="#1c1c1c" stroke-width="1.250" fill="none"><path d="M.9 .9l10.200 10.200M11.100 .9L.9 11.100"/></svg>
<span class="t dt" style="left:192.2px;top:207.9px;font-size:10.3px;letter-spacing:0.111px;">FORMAT</span>
<span class="t dt" style="left:249.6px;top:207.9px;font-size:10.3px;letter-spacing:-0.014px;">OUTPUT</span>
<div class="abs" id="ul"></div>
<span class="t dt" style="left:208.2px;top:244.9px;font-size:10.3px;letter-spacing:0.409px;">NAME</span>
<span class="t dt" style="left:471.6px;top:244.9px;font-size:10.3px;letter-spacing:0.015px;">VALUE</span>
<div class="abs" id="thl"></div>
<span class="t pr" style="left:210.5px;top:277.0px;font-size:10.4px;letter-spacing:0.05px;">Characters escape</span>
<span class="t pr" style="left:473.9px;top:277.0px;font-size:10.4px;letter-spacing:0.05px;">quotes</span>
<svg class="abs" style="left:791.500px;top:278.8px" width="8" height="5.500" viewBox="0 0 8 5.500"><path d="M.9 .9l3 3L6.900 .9" fill="none" stroke="#1c1c1c" stroke-width="1.700"/></svg>
<span class="t pr" style="left:210.5px;top:306.9px;font-size:10.4px;letter-spacing:0.05px;">Delimiter</span>
<span class="t pr" style="left:473.9px;top:306.9px;font-size:10.4px;letter-spacing:0.05px;">,</span>
<span class="t pr" style="left:210.5px;top:335.4px;font-size:10.4px;letter-spacing:0.05px;">File extension</span>
<span class="t pr" style="left:473.9px;top:335.4px;font-size:10.4px;letter-spacing:0.05px;">csv</span>
<span class="t pr" style="left:210.5px;top:363.4px;font-size:10.4px;letter-spacing:0.05px;">Format numbers</span>
<span class="t pr" style="left:473.9px;top:363.4px;font-size:10.4px;letter-spacing:0.05px;">false</span>
<span class="t pr" style="left:210.5px;top:393.3px;font-size:10.4px;letter-spacing:0.05px;">Header</span>
<span class="t pr" style="left:473.9px;top:393.3px;font-size:10.4px;letter-spacing:0.05px;">top</span>
<svg class="abs" style="left:791.500px;top:394.6px" width="8" height="5.500" viewBox="0 0 8 5.500"><path d="M.9 .9l3 3L6.900 .9" fill="none" stroke="#1c1c1c" stroke-width="1.700"/></svg>
<span class="t pr" style="left:210.5px;top:425.2px;font-size:10.4px;letter-spacing:0.05px;">Header case</span>
<span class="t pr" style="left:473.9px;top:425.2px;font-size:10.4px;letter-spacing:0.05px;">as is</span>
<svg class="abs" style="left:791.500px;top:426.5px" width="8" height="5.500" viewBox="0 0 8 5.500"><path d="M.9 .9l3 3L6.900 .9" fill="none" stroke="#1c1c1c" stroke-width="1.700"/></svg>
<div class="abs" id="clip">
<span class="t pr fd" style="left:34.5px;top:5.1px;font-size:10.5px;letter-spacing:0.05px;">Header format</span>
<span class="t pr fd" style="left:297.9px;top:5.1px;font-size:10.5px;letter-spacing:0.0px;">label</span>
<svg class="abs" style="left:615.500px;top:7.8px" width="8" height="5.500" viewBox="0 0 8 5.500"><path d="M.9 .9l3 3L6.900 .9" fill="none" stroke="#d4d4d4" stroke-width="1.700"/></svg>
</div>
<div class="abs btn" style="left:197.300px;width:63.500px"></div>
<div class="abs btn" style="left:622.200px;width:80.600px"></div>
<div class="abs btn nx" style="left:724.300px;width:62.700px"></div>
<span class="t bt" style="left:211.2px;top:501.9px;font-size:11.8px;letter-spacing:0.809px;">BACK</span>
<span class="t bt" style="left:636.0px;top:501.9px;font-size:11.8px;letter-spacing:0.799px;">CANCEL</span>
<span class="t bt bn" style="left:737.8px;top:501.9px;font-size:11.8px;letter-spacing:0.911px;">NEXT</span>
</div>
</body>
</html>
